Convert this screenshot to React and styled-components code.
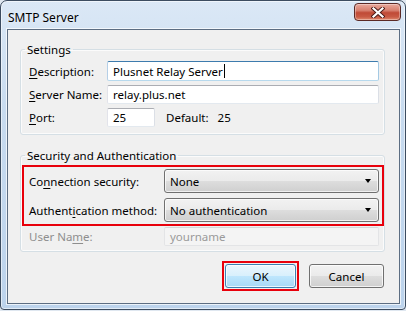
import React from "react";
import styled, { createGlobalStyle } from "styled-components";

const Global = createGlobalStyle`
  html, body { margin: 0; padding: 0; background: #dfe7f0; }
  * { box-sizing: border-box; }
  body { font-family: "Noto Sans", "Open Sans", sans-serif; font-size: 11.5px; color: #000; }
`;

const Window = styled.div`
  width: 406px;
  height: 310px;
  border: 1px solid #3c4c60;
  border-radius: 7px 7px 4px 4px;
  background: linear-gradient(to bottom, #dbe8f6 0%, #c8dbef 35%, #bcd3ec 100%);
  padding: 0 5px 5px 6px;
  display: flex;
  flex-direction: column;
  box-shadow: inset 0 0 0 1px rgba(255,255,255,0.55);
`;

const TitleBar = styled.div`
  height: 28px;
  display: flex;
  align-items: flex-start;
  justify-content: space-between;
  flex: none;
`;

const Title = styled.div`
  padding: 9px 0 0 1px;
  font-size: 12px;
  line-height: 15px;
  color: #000;
  text-shadow: 0 0 6px rgba(255,255,255,0.9);
`;

const CloseButton = styled.div`
  width: 47px;
  height: 18px;
  margin: 2px -1px 0 0;
  border: 1px solid #5b2a26;
  border-radius: 4px;
  background: linear-gradient(to bottom, #e9a99c 0%, #d7806f 40%, #c04a36 55%, #c85a44 80%, #e08a6e 100%);
  box-shadow: inset 0 0 0 1px rgba(255,255,255,0.35);
  display: flex;
  align-items: center;
  justify-content: center;
`;

const Client = styled.div`
  flex: 1;
  border: 1px solid #5c6d82;
  background: #f0f0f0;
  padding: 12px 14px 0 12px;
  display: flex;
  flex-direction: column;
  box-shadow: 0 0 0 1px rgba(255,255,255,0.7);
`;

const Group = styled.fieldset`
  margin: 0 0 ${p => p.$mb || 0}px 0;
  border: 1px solid #d5dfe5;
  border-radius: 3px;
  padding: ${p => p.$pad};
  box-shadow: inset 0 0 0 1px #fbfbfb;
  min-width: 0;
`;

const Legend = styled.legend`
  margin-left: -4px;
  padding: 0 2px;
  font-size: 11.5px;
  line-height: 15px;
`;

const FormGrid = styled.div`
  display: grid;
  grid-template-columns: ${p => p.$label}px 1fr;
  row-gap: ${p => p.$gap}px;
  align-items: center;
`;

const Label = styled.label`
  line-height: 15px;
  white-space: nowrap;
  color: ${p => (p.$disabled ? "#8e8e8e" : "#000")};
  u { text-decoration: underline; text-underline-offset: 2px; }
`;

const TextBox = styled.div`
  height: ${p => p.$h}px;
  width: ${p => (p.$w ? `${p.$w}px` : "auto")};
  border: 1px solid;
  border-color: ${p =>
    p.$focus
      ? "#3d7bad #a4c9e3 #b7d9ed #b5cfe7"
      : p.$disabled
      ? "#d5d6d8 #e3e4e6 #e3e4e6 #e3e4e6"
      : "#abadb3 #dbdfe6 #e3e9ef #e2e3ea"};
  border-radius: 2px;
  background: ${p => (p.$disabled ? "#f4f4f4" : "#fff")};
  padding: 0 5px;
  display: flex;
  align-items: center;
  line-height: 15px;
  color: ${p => (p.$disabled ? "#9a9a9a" : "#000")};
  white-space: nowrap;
  overflow: hidden;
`;

const Caret = styled.span`
  display: inline-block;
  width: 1px;
  height: 14px;
  background: #000;
  margin-left: 1px;
`;

const PortRow = styled.div`
  display: flex;
  align-items: center;
`;

const DefaultText = styled.span`
  margin-left: 11px;
  line-height: 15px;
  word-spacing: 6px;
`;

const Highlight = styled.div`
  border: 2px solid #e8000b;
  padding: ${p => p.$pad};
  margin: ${p => p.$margin || 0};
`;

const Combo = styled.div`
  height: 24px;
  border: 1px solid #707070;
  border-radius: 3px;
  background: linear-gradient(to bottom, #f2f2f2 0%, #ebebeb 48%, #dddddd 52%, #cfcfcf 100%);
  box-shadow: inset 0 0 0 1px rgba(255,255,255,0.7);
  padding: 0 7px 0 5px;
  display: flex;
  align-items: center;
  justify-content: space-between;
  line-height: 15px;
`;

const Arrow = styled.span`
  width: 0;
  height: 0;
  border-left: 3.5px solid transparent;
  border-right: 3.5px solid transparent;
  border-top: 4px solid #000;
`;

const Buttons = styled.div`
  margin-top: 9px;
  display: flex;
  justify-content: flex-end;
  align-items: center;
  gap: 10px;
  padding-right: 1px;
`;

const Button = styled.div`
  width: ${p => p.$w}px;
  height: 24px;
  border: 1px solid ${p => (p.$default ? "#3c7fb1" : "#707070")};
  border-radius: 3px;
  background: ${p =>
    p.$default
      ? "linear-gradient(to bottom, #eaf6fd 0%, #d9f0fc 48%, #bee6fd 52%, #a7d9f5 100%)"
      : "linear-gradient(to bottom, #f2f2f2 0%, #ebebeb 48%, #dddddd 52%, #cfcfcf 100%)"};
  box-shadow: inset 0 0 0 1px rgba(255,255,255,0.75);
  display: flex;
  align-items: center;
  justify-content: center;
  line-height: 15px;
`;

const SettingsGrid = styled(FormGrid)`
  margin-top: 4px;
`;

const SecurityBody = styled.div`
  display: flex;
  flex-direction: column;
  gap: 1px;
  margin-top: 2px;
`;

export default function App() {
  return (
    <>
      <Global />
      <Window>
        <TitleBar>
          <Title>SMTP Server</Title>
          <CloseButton>
            <svg width="14" height="11" viewBox="0 0 14 11">
              <path d="M2.5 1.5 L11.5 9.5 M11.5 1.5 L2.5 9.5" stroke="#4a1a16" strokeWidth="4" strokeLinecap="square" />
              <path d="M2.5 1.5 L11.5 9.5 M11.5 1.5 L2.5 9.5" stroke="#fff" strokeWidth="2.2" strokeLinecap="square" />
            </svg>
          </CloseButton>
        </TitleBar>
        <Client>
          <Group $pad="0 5px 7px 8px" $mb={13}>
            <Legend>Settings</Legend>
            <SettingsGrid $label={78} $gap={4}>
              <Label><u>D</u>escription:</Label>
              <TextBox $h={20} $focus>Plusnet Relay Server<Caret /></TextBox>
              <Label><u>S</u>erver Name:</Label>
              <TextBox $h={19}>relay.plus.net</TextBox>
              <Label><u>P</u>ort:</Label>
              <PortRow>
                <TextBox $h={19} $w={48}>25</TextBox>
                <DefaultText>Default: 25</DefaultText>
              </PortRow>
            </SettingsGrid>
          </Group>
          <Group $pad="0 5px 5px 8px">
            <Legend>Security and Authentication</Legend>
            <SecurityBody>
              <Highlight $pad="2px 3px 2px 5px" $margin="0 -5px 0 -7px">
                <FormGrid $label={135} $gap={5}>
                  <Label>Co<u>n</u>nection security:</Label>
                  <Combo>None<Arrow /></Combo>
                  <Label>Authent<u>i</u>cation method:</Label>
                  <Combo>No authentication<Arrow /></Combo>
                </FormGrid>
              </Highlight>
              <FormGrid $label={135} $gap={0}>
                <Label $disabled>User Na<u>m</u>e:</Label>
                <TextBox $h={19} $disabled>yourname</TextBox>
              </FormGrid>
            </SecurityBody>
          </Group>
          <Buttons>
            <Highlight $pad="1px">
              <Button $w={71} $default>OK</Button>
            </Highlight>
            <Button $w={75}>Cancel</Button>
          </Buttons>
        </Client>
      </Window>
    </>
  );
}
